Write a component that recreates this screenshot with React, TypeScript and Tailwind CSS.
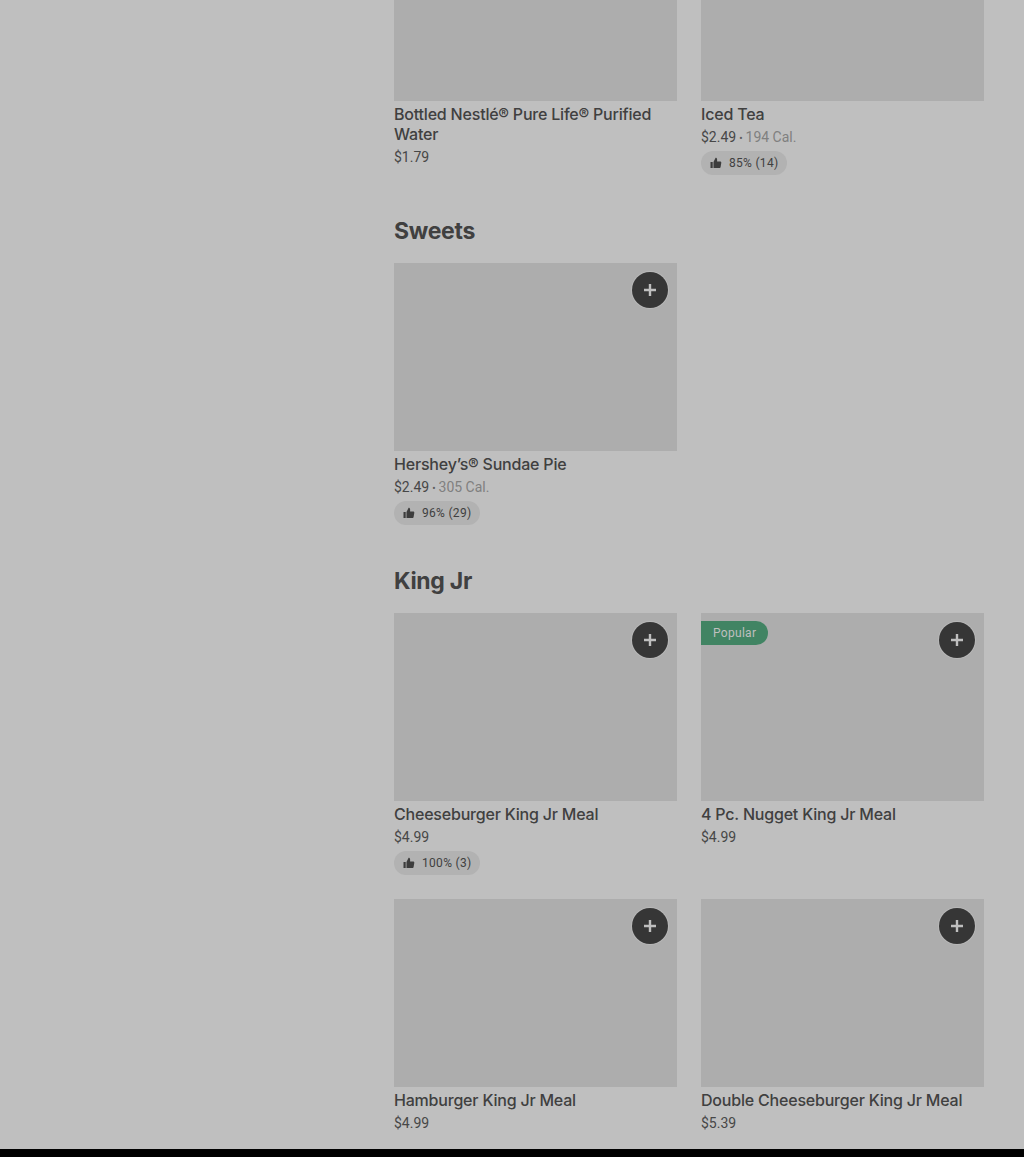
import React from 'react';

type Item = {
  name: string;
  price: string;
  cal?: string;
  rating?: string;
  popular?: boolean;
  noAdd?: boolean;
  imageClass?: string;
};

const ThumbIcon = () => (
  <svg width="12" height="12" viewBox="0 0 12 12" className="shrink-0" aria-hidden="true">
    <path d="M0.5 5h2.2v6H0.5z" fill="#3d3d3d" />
    <path d="M3.5 5 5.6 0.8c.9 0 1.5.6 1.5 1.5V4.4h3c.8 0 1.3.6 1.2 1.3l-.7 4.2c-.1.6-.6 1.1-1.2 1.1H3.5z" fill="#3d3d3d" />
  </svg>
);

const PlusIcon = () => (
  <svg width="12" height="12" viewBox="0 0 12 12" aria-hidden="true">
    <path d="M4.8 0h2.4v4.8H12v2.4H7.2V12H4.8V7.2H0V4.8h4.8z" fill="#bfbfbf" />
  </svg>
);

const MenuCard = ({ item }: { item: Item }) => (
  <div className="min-w-0">
    <div className={`relative bg-[#adadad] ${item.imageClass ?? 'h-[188px]'}`}>
      {item.popular && (
        <span className="absolute left-0 top-2 flex h-6 items-center rounded-r-full bg-[#418463] pl-3 pr-3 font-['Roboto',sans-serif] text-xs tracking-[0.3px] text-[#bfbfbf]">
          Popular
        </span>
      )}
      {!item.noAdd && (
        <button className="absolute right-[9px] top-[9px] flex h-9 w-9 items-center justify-center rounded-full bg-[#363636] shadow-[0_0_0_1px_#b8b8b8]">
          <PlusIcon />
        </button>
      )}
    </div>
    <div className="mt-[3px] text-base font-medium leading-5 tracking-[-0.2px] text-[#404040]">{item.name}</div>
    <div className="mt-[3px] font-['Roboto',sans-serif] text-sm leading-5 text-[#474747]">
      {item.price}
      {item.cal && (
        <>
          <span className="mx-[3px] text-[10px] leading-none text-[#5e5e5e]">•</span>
          <span className="text-[#808080]">{item.cal}</span>
        </>
      )}
    </div>
    {item.rating && (
      <div className="mt-1 flex h-6 w-fit items-center gap-[7px] rounded-full bg-[#b2b2b2] px-[9px] font-['Roboto',sans-serif] text-xs tracking-[0.3px] text-[#404040]">
        <ThumbIcon />
        {item.rating}
      </div>
    )}
  </div>
);

const Section = ({ title, items }: { title: string; items: Item[] }) => (
  <section className="mt-10">
    <h2 className="mb-4 text-[23px] font-bold leading-[32px] tracking-[-0.3px] text-[#404040]">{title}</h2>
    <div className="grid grid-cols-2 gap-x-6 gap-y-6">
      {items.map((item) => (
        <MenuCard key={item.name} item={item} />
      ))}
    </div>
  </section>
);

const drinks: Item[] = [
  { name: 'Bottled Nestlé® Pure Life® Purified Water', price: '$1.79', noAdd: true, imageClass: 'h-[101px]' },
  { name: 'Iced Tea', price: '$2.49', cal: '194 Cal.', rating: '85% (14)', noAdd: true, imageClass: 'h-[101px]' },
];

const sweets: Item[] = [
  { name: 'Hershey’s® Sundae Pie', price: '$2.49', cal: '305 Cal.', rating: '96% (29)' },
];

const kingJr: Item[] = [
  { name: 'Cheeseburger King Jr Meal', price: '$4.99', rating: '100% (3)' },
  { name: '4 Pc. Nugget King Jr Meal', price: '$4.99', popular: true },
  { name: 'Hamburger King Jr Meal', price: '$4.99' },
  { name: 'Double Cheeseburger King Jr Meal', price: '$5.39' },
];

export default function App() {
  return (
    <div className="flex h-[1157px] flex-col overflow-hidden bg-black font-['Inter','Liberation_Sans',sans-serif]">
      <div className="h-[1149px] bg-[#bfbfbf] pl-[394px] pr-10">
        <div className="grid grid-cols-2 gap-x-6">
          {drinks.map((item) => (
            <MenuCard key={item.name} item={item} />
          ))}
        </div>
        <Section title="Sweets" items={sweets} />
        <Section title="King Jr" items={kingJr} />
      </div>
    </div>
  );
}
